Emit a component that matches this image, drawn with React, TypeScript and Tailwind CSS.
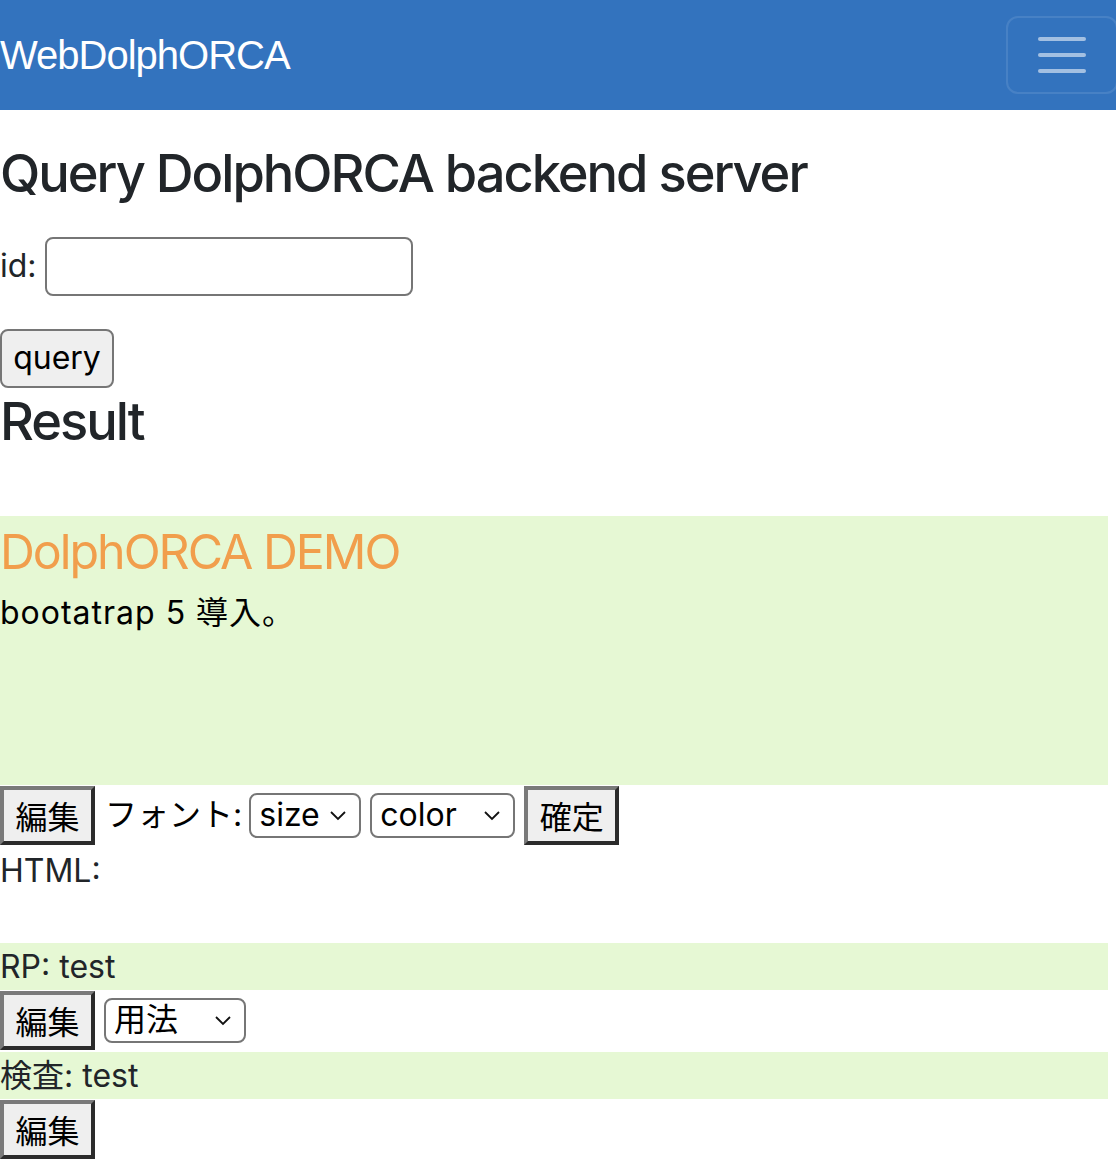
import React from "react";

const Chevron = () => (
  <svg width="18" height="11" viewBox="0 0 18 11" className="shrink-0">
    <path d="M2 2 L9 9 L16 2" fill="none" stroke="#111" strokeWidth="1.8" />
  </svg>
);

const btn3d =
  "h-[59px] w-[95px] shrink-0 bg-[#efefef] border-[4px] border-solid border-t-[#7a7a7a] border-l-[#7a7a7a] border-b-[#2b2b2b] border-r-[#2b2b2b] text-black text-[32px] leading-none flex items-center justify-center font-['Noto_Sans_CJK_JP',sans-serif]";

const EditButton = () => <button className={btn3d}>編集</button>;

const Select = ({ label, w }: { label: string; w: string }) => (
  <div className={`${w} h-[45px] shrink-0 border-2 border-[#767676] rounded-[8px] bg-white flex items-center justify-between pl-[8px] pr-[12px] text-black text-[32px] leading-none`}>
    <span>{label}</span>
    <Chevron />
  </div>
);

export default function App() {
  return (
    <div className="min-h-[1160px] bg-white text-[#212529] text-[32px] leading-[1.5] font-['Inter','Noto_Sans_CJK_JP',sans-serif]">
      <nav className="h-[110px] bg-[#3373be] flex items-center justify-between overflow-hidden">
        <span className="text-[40px] text-white leading-none font-['Liberation_Sans',sans-serif] tracking-[-1px]">WebDolphORCA</span>
        <button className="w-[112px] h-[78px] -mr-[2px] border-2 border-white/10 rounded-[12px] flex flex-col items-center justify-center gap-[12px]">
          <span className="block w-[48px] h-[4px] rounded-full bg-white/55" />
          <span className="block w-[48px] h-[4px] rounded-full bg-white/55" />
          <span className="block w-[48px] h-[4px] rounded-full bg-white/55" />
        </button>
      </nav>

      <h1 className="mt-[32px] mb-[32px] text-[52.4px] leading-[1.2] font-medium tracking-[-2px]">
        Query DolphORCA backend server
      </h1>

      <div className="flex items-center h-[59px]">
        <span className="mr-[8px]">id:</span>
        <input className="w-[368px] h-[59px] border-2 border-[#767676] rounded-[8px] bg-white outline-none" />
      </div>

      <button className="mt-[33px] h-[59px] w-[114px] bg-[#efefef] border-2 border-[#767676] rounded-[8px] text-black text-[32px] leading-none flex items-center justify-center">
        query
      </button>

      <h2 className="mt-[2px] mb-[63px] text-[52.4px] leading-[1.2] font-medium tracking-[-2px]">Result</h2>

      <div className="w-[1108px] h-[269px] bg-[#e6f8d4] pt-[7px]">
        <h3 className="text-[48.3px] leading-[1.2] text-[#f19e4c] mb-[8px] tracking-[-2px]">DolphORCA DEMO</h3>
        <p className="text-black tracking-[1px]">bootatrap 5 導入。</p>
      </div>

      <div className="flex items-center h-[59px] mt-[1px]">
        <EditButton />
        <span className="ml-[10px] mr-[7px] text-black">フォント:</span>
        <Select label="size" w="w-[112px]" />
        <div className="w-[9px]" />
        <Select label="color" w="w-[145px]" />
        <div className="w-[9px]" />
        <button className={btn3d}>確定</button>
      </div>

      <div className="h-[48px] mt-[2px]">HTML:</div>
      <div className="h-[48px]" />

      <div className="w-[1108px] h-[47px] bg-[#e6f8d4] leading-[47px]">RP: test</div>
      <div className="flex items-center h-[59px] mt-[1px]">
        <EditButton />
        <div className="w-[9px]" />
        <Select label="用法" w="w-[142px]" />
      </div>
      <div className="w-[1108px] h-[47px] mt-[2px] bg-[#e6f8d4] leading-[47px]">検査: test</div>
      <div className="flex items-center h-[59px] mt-[1px]">
        <EditButton />
      </div>
    </div>
  );
}
